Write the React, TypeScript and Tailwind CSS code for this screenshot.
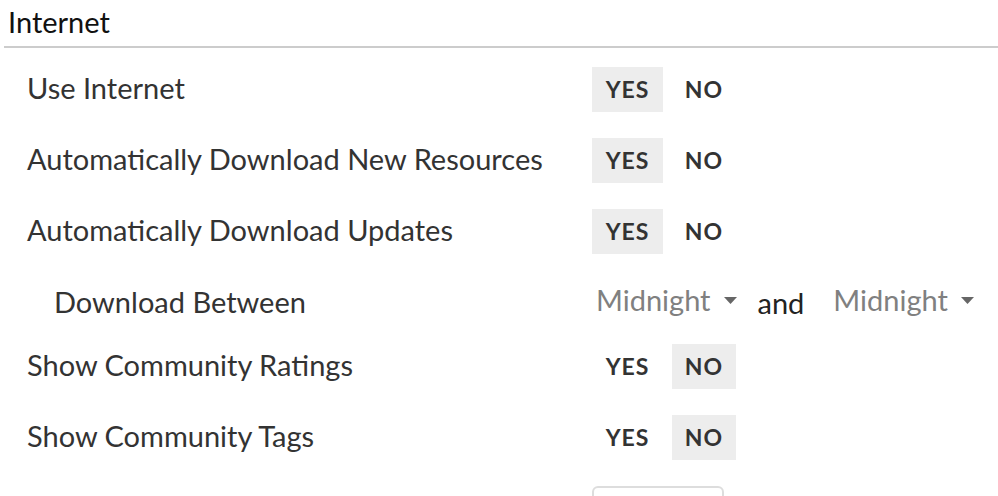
import React from "react";

const labelFont = { fontFamily: "Lato, 'Noto Sans', sans-serif" };

function Toggle({ value }: { value: "yes" | "no" }) {
  return (
    <div className="flex items-center gap-[9px]" style={{ fontFamily: "Lato, sans-serif" }}>
      <div
        className={`h-[45px] w-[71px] flex items-center justify-center text-[23px] font-bold tracking-[1px] text-[#333] ${
          value === "yes" ? "bg-[#ededed]" : ""
        }`}
      >
        YES
      </div>
      <div
        className={`h-[45px] w-[64px] flex items-center justify-center text-[23px] font-bold tracking-[1px] text-[#333] ${
          value === "no" ? "bg-[#ededed]" : ""
        }`}
      >
        NO
      </div>
    </div>
  );
}

function Row({ label, value }: { label: string; value: "yes" | "no" }) {
  return (
    <div className="flex items-center h-[71px]">
      <div className="w-[592px] pl-[27px] mb-[3px] text-[29px] text-[#333]">{label}</div>
      <Toggle value={value} />
    </div>
  );
}

function Select() {
  return (
    <div className="flex items-center text-[29px] text-[#808080]">
      <span>Midnight</span>
      <svg width="13" height="8" viewBox="0 0 13 8" className="ml-[13px] mt-[2px]">
        <polygon points="0,0 13,0 6.5,7" fill="#666" />
      </svg>
    </div>
  );
}

export default function App() {
  return (
    <div className="w-[998px] h-[496px] overflow-hidden bg-white" style={labelFont}>
      <div className="pl-[8px] pt-[3px] h-[46px] text-[29px] text-[#111] leading-[38px]">Internet</div>
      <div className="ml-[4px] h-[2px] bg-[#cccccc]" />
      <div className="pt-[6px]">
        <Row label="Use Internet" value="yes" />
        <Row label="Automatically Download New Resources" value="yes" />
        <Row label="Automatically Download Updates" value="yes" />
        <div className="flex items-center h-[64px] pt-[8px]">
          <div className="w-[592px] pl-[54px] mb-[2px] text-[29px] text-[#333]">Download Between</div>
          <div className="flex items-center pl-[4px]">
            <div className="-mt-[6px]">
              <Select />
            </div>
            <span className="ml-[21px] text-[29px] text-[#222]">and</span>
            <div className="ml-[29px] -mt-[6px]">
              <Select />
            </div>
          </div>
        </div>
        <Row label="Show Community Ratings" value="no" />
        <Row label="Show Community Tags" value="no" />
        <div className="flex h-[71px] pt-[13px]">
          <div className="w-[592px]" />
          <div className="w-[132px] h-[45px] rounded-[6px] border-2 border-[#dddddd]" />
        </div>
      </div>
    </div>
  );
}
